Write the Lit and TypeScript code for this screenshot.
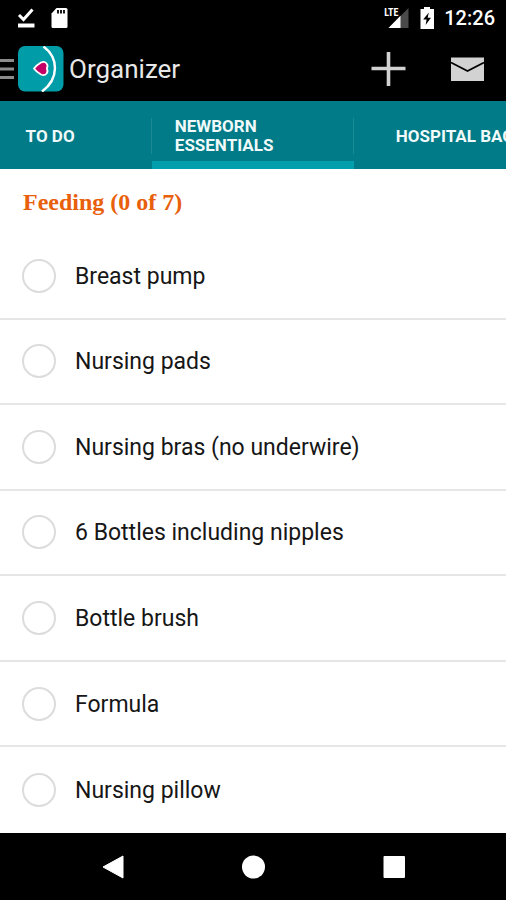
import { LitElement, html, css } from "lit";
import { customElement, state } from "lit/decorators.js";

@customElement("status-bar")
class StatusBar extends LitElement {
  static styles = css`
    :host {
      display: flex;
      align-items: center;
      justify-content: space-between;
      height: 36px;
      padding: 0 11px 0 17px;
      background: #000;
      color: #fff;
    }
    .group {
      display: flex;
      align-items: center;
    }
    .notices {
      gap: 15px;
    }
    .signal {
      position: relative;
      display: flex;
      padding-left: 5px;
      margin-right: 11px;
    }
    .network {
      position: absolute;
      left: 1px;
      top: 0;
      font: 700 10px/9px "Roboto Condensed", Roboto, sans-serif;
    }
    .clock {
      margin-left: 9px;
      font: 500 20px/24px Roboto, sans-serif;
    }
    svg {
      display: block;
    }
  `;

  render() {
    return html`
      <div class="group notices">
        <svg width="18" height="20" viewBox="0 0 18 20" aria-hidden="true">
          <path d="M2 7 L6.500 11.500 L15.500 1.500" fill="none" stroke="#fff" stroke-width="3" />
          <path d="M1 15.500 H17.500 V19.500 H1 Z" fill="#fff" />
        </svg>
        <svg width="18" height="20" viewBox="0 0 18 20" aria-hidden="true">
          <path d="M6.500 0 H16 Q17.500 0 17.500 1.500 V18.500 Q17.500 20 16 20 H3 Q1.500 20 1.500 18.500 V5.500 Z" fill="#fff" />
          <path d="M8 2 V5.500 M11 2 V5.500 M14 2 V5.500" stroke="#000" stroke-width="1.800" />
        </svg>
      </div>
      <div class="group">
        <div class="signal">
          <span class="network">LTE</span>
          <svg width="21" height="20" viewBox="0 0 21 20" aria-hidden="true">
            <path d="M20.500 0 V20 H0.500 Z" fill="#4a4a4a" />
            <path d="M12.500 7.800 V20 H0.500 Z" fill="#fff" />
          </svg>
        </div>
        <svg width="15" height="22" viewBox="0 0 15 22" aria-hidden="true">
          <path d="M4 0 H10 V2 H14 V22 H0.500 V2 H4 Z" fill="#fff" />
          <path d="M8.800 5.500 L3.200 12.500 H6.600 L5.600 18 L11 10.800 H7.700 Z" fill="#000" />
        </svg>
        <span class="clock">12:26</span>
      </div>
    `;
  }
}

@customElement("app-header")
class AppHeader extends LitElement {
  static styles = css`
    :host {
      display: flex;
      align-items: center;
      height: 65px;
      padding-right: 22px;
      background: #000;
    }
    button {
      display: flex;
      padding: 0;
      border: 0;
      background: none;
      cursor: pointer;
    }
    .home {
      align-items: center;
      gap: 4px;
    }
    h1 {
      flex: 1;
      margin: 0 0 0 5px;
      font: 400 26px/32px Roboto, sans-serif;
      color: #e8e8e8;
    }
    .actions {
      display: flex;
      align-items: center;
      gap: 44px;
    }
  `;

  render() {
    return html`
      <button class="home" aria-label="Open menu">
        <svg width="14" height="46" viewBox="0 0 14 46" aria-hidden="true">
          <path d="M0 14.500 H14 M0 23 H14 M0 31.500 H14" stroke="#8c8c8c" stroke-width="2.800" />
        </svg>
        <svg width="46" height="46" viewBox="0 0 46 46" aria-hidden="true">
          <rect width="45.500" height="45.500" rx="7" fill="#009ca8" />
          <path d="M25.500 0.500 C41 12 41 33 24 45.500" fill="none" stroke="#fff" stroke-width="2.400" />
          <path
            d="M16 22.500 C18 19.500 20.500 18 23 16.500 C27.500 14.500 31 18.500 28.800 22.500 C31 26.500 27.500 30.500 23 28.500 C20.500 27 18 25.500 16 22.500 Z"
            fill="#c40067" stroke="#fff" stroke-width="1.800" stroke-linejoin="round" />
        </svg>
      </button>
      <h1>Organizer</h1>
      <div class="actions">
        <button aria-label="Add item">
          <svg width="36" height="34" viewBox="0 0 36 34" aria-hidden="true">
            <path d="M18.500 0 V34 M1.500 16.500 H35.500" stroke="#d2d2d2" stroke-width="3.600" />
          </svg>
        </button>
        <button aria-label="Send by email">
          <svg width="34" height="24" viewBox="0 0 34 24" aria-hidden="true">
            <path d="M1 0.500 H34 V24 H1 Z" fill="#d2d2d2" />
            <path d="M1 5.500 L17.500 14 L34 5.500" fill="none" stroke="#000" stroke-width="1.800" />
          </svg>
        </button>
      </div>
    `;
  }
}

@customElement("tab-strip")
class TabStrip extends LitElement {
  @state() private active = 1;
  private tabs = ["To do", "Newborn essentials", "Hospital bag"];

  static styles = css`
    :host {
      display: flex;
      justify-content: center;
      overflow: hidden;
      background: #007b87;
    }
    .tab {
      display: flex;
      flex: 0 0 40%;
      box-sizing: border-box;
      flex-direction: column;
      padding: 17px 0 0;
      border: 0;
      background: none;
      color: #f0fafa;
      font: 700 17px/19px Roboto, sans-serif;
      text-align: left;
      text-transform: uppercase;
      cursor: pointer;
    }
    .label {
      display: flex;
      align-items: center;
      align-self: stretch;
      justify-content: center;
      height: 36px;
      margin-bottom: 7px;
      padding: 0 23px;
      border-right: 1px solid #1c8a95;
    }
    .bar {
      align-self: stretch;
      height: 8px;
    }
    .active .bar {
      background: #009fab;
    }
  `;

  render() {
    return html`${this.tabs.map(
      (tab, i) => html`
        <button
          class="tab ${i === this.active ? "active" : ""}"
          aria-pressed=${i === this.active}
          @click=${() => (this.active = i)}
        >
          <span class="label">${tab}</span>
          <span class="bar"></span>
        </button>
      `
    )}`;
  }
}

@customElement("check-list")
class CheckList extends LitElement {
  @state() private done = new Set<string>();
  private items = [
    "Breast pump",
    "Nursing pads",
    "Nursing bras (no underwire)",
    "6 Bottles including nipples",
    "Bottle brush",
    "Formula",
    "Nursing pillow",
  ];

  static styles = css`
    :host {
      display: flex;
      flex-direction: column;
      background: #fff;
    }
    h2 {
      margin: 0;
      padding: 17px 23px 16px;
      color: #e8600c;
      font: 700 24px/32px "Liberation Serif", serif;
    }
    ul {
      display: grid;
      flex: 1;
      grid-auto-rows: minmax(64px, 1fr);
      margin: 0;
      padding: 0;
      list-style: none;
    }
    li {
      display: flex;
      border-bottom: 2px solid #e6e6e6;
    }
    li:last-child {
      border-bottom: 0;
    }
    label {
      display: flex;
      flex: 1;
      align-items: center;
      gap: 19px;
      padding: 0 22px;
      color: #161616;
      font: 400 23px/28px Roboto, sans-serif;
      cursor: pointer;
    }
    label span {
      padding-top: 2px;
    }
    input {
      appearance: none;
      box-sizing: border-box;
      flex: none;
      width: 34px;
      height: 34px;
      margin: 0;
      border: 2px solid #dcdcdc;
      border-radius: 50%;
    }
    input:checked {
      background: #009fab;
    }
  `;

  private toggle(item: string) {
    const next = new Set(this.done);
    next.has(item) ? next.delete(item) : next.add(item);
    this.done = next;
  }

  render() {
    return html`
      <h2>Feeding (${this.done.size} of ${this.items.length})</h2>
      <ul>
        ${this.items.map(
          (item) => html`
            <li>
              <label>
                <input type="checkbox" .checked=${this.done.has(item)} @change=${() => this.toggle(item)} />
                <span>${item}</span>
              </label>
            </li>
          `
        )}
      </ul>
    `;
  }
}

@customElement("nav-bar")
class NavBar extends LitElement {
  static styles = css`
    :host {
      display: flex;
      align-items: center;
      justify-content: center;
      gap: 116px;
      height: 67px;
      background: #000;
    }
    button {
      display: flex;
      padding: 0;
      border: 0;
      background: none;
      cursor: pointer;
    }
  `;

  render() {
    return html`
      <button aria-label="Back">
        <svg width="24" height="24" viewBox="0 0 24 24" aria-hidden="true">
          <path d="M2 12 L22 1 V23 Z" fill="#fff" stroke="#fff" stroke-linejoin="round" />
        </svg>
      </button>
      <button aria-label="Home">
        <svg width="24" height="24" viewBox="0 0 24 24" aria-hidden="true">
          <circle cx="12.500" cy="12" r="11.500" fill="#fff" />
        </svg>
      </button>
      <button aria-label="Recent apps">
        <svg width="24" height="24" viewBox="0 0 24 24" aria-hidden="true">
          <rect x="2.500" y="1" width="21.500" height="22" rx="1" fill="#fff" />
        </svg>
      </button>
    `;
  }
}

@customElement("app-root")
class AppRoot extends LitElement {
  static styles = css`
    :host {
      display: flex;
      flex-direction: column;
      min-height: 100vh;
    }
    .content {
      flex: 1;
    }
  `;

  render() {
    return html`
      <status-bar></status-bar>
      <app-header></app-header>
      <tab-strip></tab-strip>
      <check-list class="content"></check-list>
      <nav-bar></nav-bar>
    `;
  }
}
